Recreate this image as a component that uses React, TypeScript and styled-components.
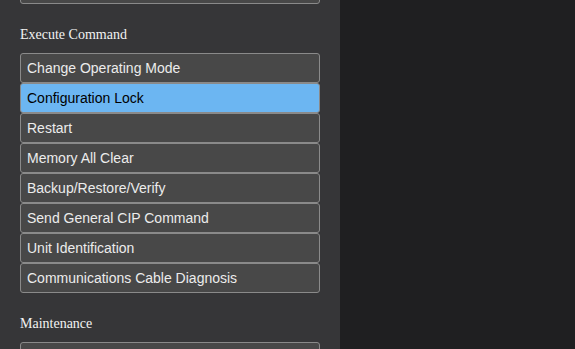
import { useLayoutEffect, useRef, useState } from "react";
import styled, { createGlobalStyle } from "styled-components";

const GlobalStyle = createGlobalStyle`
  html, body {
    margin: 0;
    padding: 0;
    height: 100%;
    background: #1f1f21;
    overflow: hidden;
  }
  #root {
    height: 100%;
  }
`;

const Layout = styled.div`
  display: flex;
  height: 100vh;
`;

const Sidebar = styled.aside`
  width: 340px;
  flex-shrink: 0;
  background: #363638;
  overflow: hidden;
  box-sizing: border-box;
`;

const SidebarInner = styled.div`
  padding: 0 20px 20px;
`;

const Workspace = styled.main`
  flex: 1;
  background: #1f1f21;
`;

const Section = styled.section`
  padding-top: 23px;
`;

const SectionTitle = styled.div`
  font-family: "Liberation Serif", "Times New Roman", serif;
  font-size: 14px;
  line-height: 16px;
  color: #f2f2f2;
  margin-bottom: 10px;
`;

const CommandList = styled.div`
  display: flex;
  flex-direction: column;
`;

const CommandButton = styled.button<{ $active?: boolean }>`
  display: block;
  width: 300px;
  height: 30px;
  box-sizing: border-box;
  padding: 0 6px;
  border: 1px solid #8a8a8a;
  border-radius: 3px;
  background: ${(p) => (p.$active ? "#6cb6f2" : "#484848")};
  color: ${(p) => (p.$active ? "#000000" : "#ececec")};
  font-family: "Liberation Sans", Arial, sans-serif;
  font-size: 14px;
  line-height: 28px;
  text-align: left;
  cursor: pointer;
`;

const sections = [
  { title: "Information", items: ["Controller Information"] },
  {
    title: "Execute Command",
    items: [
      "Change Operating Mode",
      "Configuration Lock",
      "Restart",
      "Memory All Clear",
      "Backup/Restore/Verify",
      "Send General CIP Command",
      "Unit Identification",
      "Communications Cable Diagnosis",
    ],
  },
  { title: "Maintenance", items: ["Clock Setting", "Event Log"] },
];

const App = () => {
  const [active, setActive] = useState("Configuration Lock");
  const sidebarRef = useRef<HTMLElement>(null);

  // the panel is shown scrolled so that "Execute Command" sits near the top
  useLayoutEffect(() => {
    if (sidebarRef.current) sidebarRef.current.scrollTop = 75;
  }, []);

  return (
    <>
      <GlobalStyle />
      <Layout>
        <Sidebar ref={sidebarRef}>
          <SidebarInner>
            {sections.map((s) => (
              <Section key={s.title}>
                <SectionTitle>{s.title}</SectionTitle>
                <CommandList>
                  {s.items.map((item) => (
                    <CommandButton
                      key={item}
                      $active={item === active}
                      onClick={() => setActive(item)}
                    >
                      {item}
                    </CommandButton>
                  ))}
                </CommandList>
              </Section>
            ))}
          </SidebarInner>
        </Sidebar>
        <Workspace />
      </Layout>
    </>
  );
};

export default App;
